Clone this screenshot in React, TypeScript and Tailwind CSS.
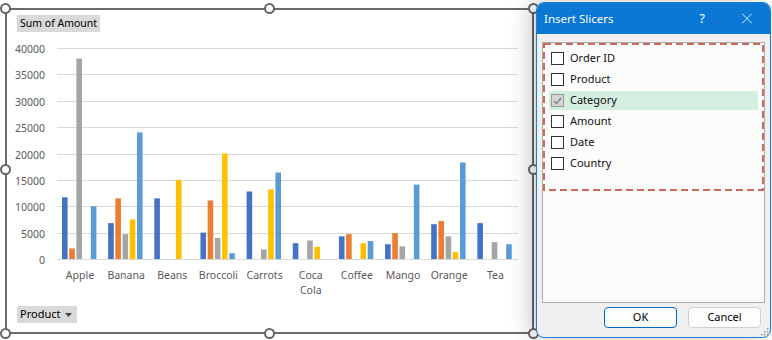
import { X } from "lucide-react";

const SERIES = ["#4472c4", "#ed7d31", "#a5a5a5", "#ffc000", "#5b9bd5"];

// [blue, orange, gray, yellow, light blue]
const DATA: { name: string[]; values: number[] }[] = [
  { name: ["Apple"], values: [11700, 2000, 38000, 0, 10000] },
  { name: ["Banana"], values: [6800, 11500, 4700, 7500, 24000] },
  { name: ["Beans"], values: [11500, 0, 0, 15000, 0] },
  { name: ["Broccoli"], values: [5000, 11100, 4000, 20000, 1100] },
  { name: ["Carrots"], values: [12800, 0, 1800, 13200, 16400] },
  { name: ["Coca", "Cola"], values: [3000, 0, 3500, 2300, 0] },
  { name: ["Coffee"], values: [4300, 4700, 0, 3000, 3400] },
  { name: ["Mango"], values: [2800, 4900, 2400, 0, 14100] },
  { name: ["Orange"], values: [6600, 7200, 4300, 1300, 18300] },
  { name: ["Tea"], values: [6800, 0, 3200, 0, 2800] },
];

const FIELDS = ["Order ID", "Product", "Category", "Amount", "Date", "Country"];

// svg coords: page x - 7, page y - 36
const Y0 = 223;
const PX_PER = 211 / 40000;
const X0 = 50;
const CAT_W = 46.15;

function Chart() {
  const ticks = [0, 5000, 10000, 15000, 20000, 25000, 30000, 35000, 40000];
  return (
    <svg width={520} height={264} className="block" style={{ fontFamily: "'Noto Sans', sans-serif" }}>
      {ticks.map((t) => {
        const y = Math.round(Y0 - t * PX_PER) + 0.5;
        return (
          <g key={t}>
            <line x1={X0} x2={511} y1={y} y2={y} stroke="#d9d9d9" strokeWidth={1} />
            <text x={38} y={y} textAnchor="end" dominantBaseline="central" fontSize={10.5} fill="#595959">
              {t}
            </text>
          </g>
        );
      })}
      {DATA.map((cat, i) => {
        const left = X0 + i * CAT_W;
        return (
          <g key={cat.name.join(" ")}>
            {cat.values.map((v, j) =>
              v > 0 ? (
                <rect
                  key={j}
                  x={left + 5 + j * 7.2}
                  y={Y0 - v * PX_PER}
                  width={5.6}
                  height={v * PX_PER}
                  fill={SERIES[j]}
                />
              ) : null
            )}
            {cat.name.map((line, k) => (
              <text
                key={line}
                x={left + 23}
                y={239 + k * 15}
                textAnchor="middle"
                dominantBaseline="central"
                fontSize={10.5}
                fill="#595959"
              >
                {line}
              </text>
            ))}
          </g>
        );
      })}
    </svg>
  );
}

function Handle({ className }: { className: string }) {
  return (
    <span
      className={`absolute size-[11px] rounded-full border-2 border-[#666] bg-white ${className}`}
    />
  );
}

export default function App() {
  return (
    <div className="relative h-[340px] w-[772px] overflow-hidden bg-white font-['Noto_Sans',sans-serif]">
      <div className="flex h-full">
        {/* chart */}
        <div className="pl-[5px] pt-[8px]">
          <div className="relative flex h-[326px] w-[529px] flex-col border-2 border-[#6b6b6b]">
            <div className="ml-[10px] mt-[5px] self-start bg-[#d9d9d9] px-[3px] text-[10.5px] leading-[17px] text-black">
              Sum of Amount
            </div>
            <div className="mt-[4px]">
              <Chart />
            </div>
            <div className="ml-[10px] mt-[6px] flex h-[17px] items-center gap-[5px] self-start bg-[#d9d9d9] pl-[3px] pr-[5px] text-[11px] text-black">
              Product
              <svg width="7" height="4" viewBox="0 0 7 4">
                <path d="M0 0h7L3.5 4z" fill="#444" />
              </svg>
            </div>
            <Handle className="-left-[7px] -top-[7px]" />
            <Handle className="left-[257px] -top-[7px]" />
            <Handle className="-right-[7px] -top-[7px]" />
            <Handle className="-left-[7px] top-[154px]" />
            <Handle className="-right-[7px] top-[154px]" />
            <Handle className="-left-[7px] -bottom-[7px]" />
            <Handle className="left-[257px] -bottom-[7px]" />
            <Handle className="-right-[7px] -bottom-[7px]" />
          </div>
        </div>

        {/* dialog */}
        <div className="relative z-10 ml-[2px] mt-[2px] flex h-[336px] w-[235px] flex-col overflow-hidden rounded-[8px] border border-[#1a7fd4] bg-[#f0f0f0] shadow-[-6px_0_22px_rgba(0,0,0,0.22)]">
          <div className="flex h-[31px] shrink-0 items-center bg-[#0a78d4] pl-[7px] text-[11.5px] text-white">
            <span className="flex-1">Insert Slicers</span>
            <span className="w-[20px] text-center text-[13px]">?</span>
            <span className="ml-[26px] mr-[14px] flex w-[18px] justify-center">
              <X size={21} strokeWidth={1.1} />
            </span>
          </div>
          <div className="ml-[5px] mt-[8px] h-[261px] w-[223px] border border-[#acacac] bg-[#fcfcfc]">
            <div className="relative h-[148px] p-[2px] pt-[6px]">
              <svg className="absolute inset-0" width="221" height="148">
                <rect
                  x="1"
                  y="1"
                  width="219"
                  height="146"
                  fill="none"
                  stroke="#c96a5b"
                  strokeWidth="2"
                  strokeDasharray="7 4"
                />
              </svg>
              {FIELDS.map((f) => {
                const on = f === "Category";
                return (
                  <div
                    key={f}
                    className={`mx-[4px] mb-[2px] flex h-[19px] items-center gap-[6px] pl-[2px] text-[11px] text-[#111] ${on ? "bg-[#d4efdf]" : ""}`}
                  >
                    <span
                      className={`flex size-[13px] items-center justify-center border ${on ? "border-[#9a9a9a] bg-[#d4d4d4]" : "border-[#333] bg-white"}`}
                    >
                      {on && (
                        <svg width="9" height="8" viewBox="0 0 9 8">
                          <path d="M1 4l2.5 2.5L8 1" fill="none" stroke="#808080" strokeWidth="1.4" />
                        </svg>
                      )}
                    </span>
                    {f}
                  </div>
                );
              })}
            </div>
          </div>
          <div className="mr-[9px] mt-[4px] flex justify-end gap-[11px] text-[11px] text-black">
            <button className="h-[21px] w-[73px] rounded-[4px] border border-[#0067c0] bg-[#fdfdfd]">OK</button>
            <button className="h-[21px] w-[73px] rounded-[4px] border border-[#d0d0d0] bg-[#fdfdfd]">Cancel</button>
          </div>
          <svg className="absolute bottom-[1px] right-[1px]" width="9" height="9" viewBox="0 0 9 9">
            {[
              [7, 1],
              [7, 4],
              [4, 4],
              [7, 7],
              [4, 7],
              [1, 7],
            ].map(([x, y]) => (
              <rect key={`${x}-${y}`} x={x} y={y} width="1.5" height="1.5" fill="#999" />
            ))}
          </svg>
        </div>
      </div>
    </div>
  );
}
